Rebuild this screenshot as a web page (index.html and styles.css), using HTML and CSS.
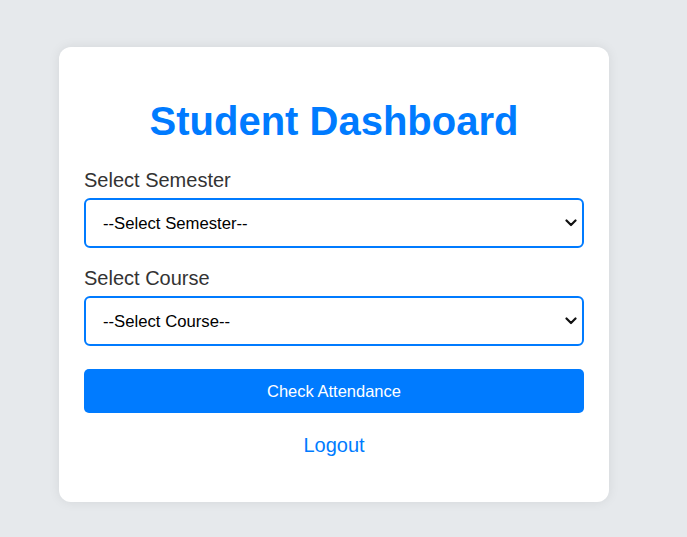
FILE: index.html
```html
<!DOCTYPE html>
<html>
<head>
<meta charset="utf-8">
<link rel="stylesheet" href="styles.css">
</head>
<body>
<div class="card">
  <h1 class="title">Student Dashboard</h1>
  <label class="label" for="sem">Select Semester</label>
  <div class="select-wrap">
    <select id="sem" class="select"><option>--Select Semester--</option></select>
    <svg class="chev" width="12" height="8" viewBox="0 0 12 8"><path d="M1.5 1.5 L6 6 L10.5 1.5" fill="none" stroke="#111" stroke-width="2.2" stroke-linecap="round" stroke-linejoin="round"/></svg>
  </div>
  <label class="label" for="course">Select Course</label>
  <div class="select-wrap last">
    <select id="course" class="select"><option>--Select Course--</option></select>
    <svg class="chev" width="12" height="8" viewBox="0 0 12 8"><path d="M1.5 1.5 L6 6 L10.5 1.5" fill="none" stroke="#111" stroke-width="2.2" stroke-linecap="round" stroke-linejoin="round"/></svg>
  </div>
  <button class="btn">Check Attendance</button>
  <a class="logout" href="#">Logout</a>
</div>
</body>
</html>
```
FILE: styles.css
```css
html, body { margin: 0; padding: 0; }
body {
  background: #e6e9ec;
  font-family: "Liberation Sans", Arial, sans-serif;
  min-height: 537px;
}
.card {
  box-sizing: border-box;
  width: 550px;
  margin: 47px 0 0 59px;
  background: #fff;
  border-radius: 12px;
  box-shadow: 0 0 12px rgba(0,0,0,0.08);
  padding: 51px 25px 45px;
  display: flex;
  flex-direction: column;
}
.title {
  margin: 0 0 25px;
  text-align: center;
  color: #007bff;
  font-size: 40px;
  font-weight: bold;
  line-height: 46px;
}
.label {
  font-size: 20px;
  line-height: 23px;
  color: #333;
  margin-bottom: 6px;
}
.select-wrap {
  position: relative;
  display: flex;
  margin-bottom: 19px;
}
.select-wrap.last { margin-bottom: 23px; }
.select {
  flex: 1;
  box-sizing: border-box;
  height: 50px;
  border: 2px solid #007bff;
  border-radius: 6px;
  padding: 0 17px;
  font-size: 16.7px;
  font-family: "Liberation Sans", Arial, sans-serif;
  color: #000;
  background: #fff;
  appearance: none;
  -webkit-appearance: none;
  outline: none;
}
.chev {
  position: absolute;
  right: 7px;
  top: 21px;
  pointer-events: none;
}
.btn {
  height: 44px;
  border: none;
  border-radius: 5px;
  background: #007bff;
  color: #fff;
  font-size: 16.5px;
  font-family: "Liberation Sans", Arial, sans-serif;
  margin-bottom: 21px;
}
.logout {
  text-align: center;
  color: #007bff;
  font-size: 20px;
  line-height: 23px;
  text-decoration: none;
}
```
